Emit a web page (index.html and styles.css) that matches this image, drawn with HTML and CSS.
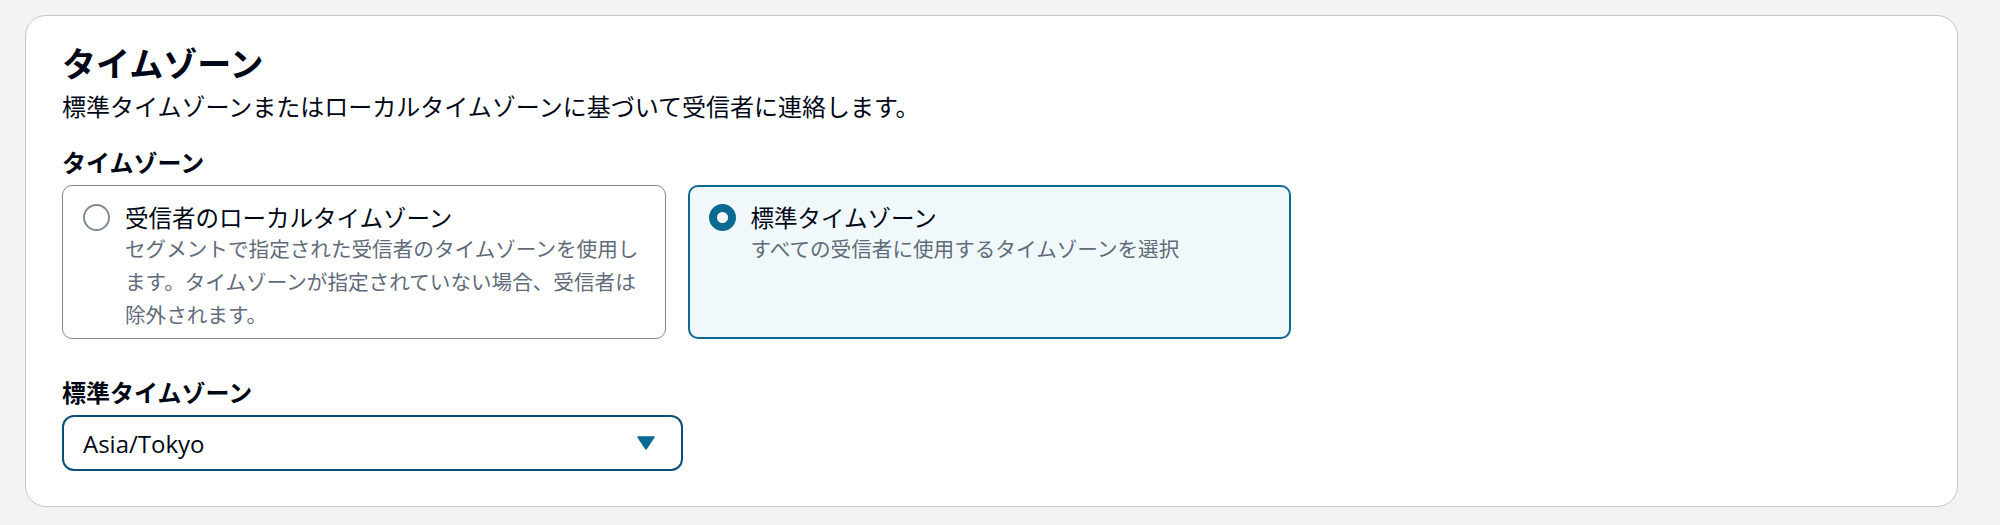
FILE: index.html
```html
<!DOCTYPE html>
<html lang="ja">
<head>
<meta charset="utf-8">
<link rel="stylesheet" href="styles.css">
</head>
<body>
<div class="page">
  <section class="card">
    <h2 class="card-title">タイムゾーン</h2>
    <p class="card-desc">標準タイムゾーンまたはローカルタイムゾーンに基づいて受信者に連絡します。</p>

    <div class="field">
      <div class="label">タイムゾーン</div>
      <div class="tiles">
        <div class="tile">
          <span class="radio"></span>
          <div class="tile-text">
            <div class="tile-title">受信者のローカルタイムゾーン</div>
            <div class="tile-desc">セグメントで指定された受信者のタイムゾーンを使用します。タイムゾーンが指定されていない場合、受信者は除外されます。</div>
          </div>
        </div>
        <div class="tile tile-selected">
          <span class="radio radio-checked"></span>
          <div class="tile-text">
            <div class="tile-title">標準タイムゾーン</div>
            <div class="tile-desc">すべての受信者に使用するタイムゾーンを選択</div>
          </div>
        </div>
      </div>
    </div>

    <div class="field field-select">
      <div class="label">標準タイムゾーン</div>
      <div class="select">
        <span class="select-value">Asia/Tokyo</span>
        <svg class="caret" width="18" height="14" viewBox="0 0 18 14"><polygon points="1,1 17,1 9,13" fill="#0b6a8f" stroke="#0b6a8f" stroke-width="1.5" stroke-linejoin="round"/></svg>
      </div>
    </div>
  </section>
</div>
</body>
</html>
```

FILE: styles.css
```css
* { box-sizing: border-box; }
html, body {
  margin: 0;
  padding: 0;
  background: #f3f3f3;
  font-family: "Open Sans", "Noto Sans CJK JP", sans-serif;
  color: #000716;
}
.page {
  padding: 15px 42px 18px 25px;
}
.card {
  background: #ffffff;
  border: 1px solid #c6c6cd;
  border-radius: 21px;
  height: 492px;
  padding: 22px 36px 34px 36px;
}
.card-title {
  margin: 0;
  font-family: "Noto Sans CJK JP", sans-serif;
  font-size: 34px;
  line-height: 50px;
  font-weight: 700;
  color: #000716;
}
.card-desc {
  margin: 0;
  font-family: "Noto Sans CJK JP", sans-serif;
  font-size: 24px;
  line-height: 35px;
  color: #000716;
}
.field {
  margin-top: 23px;
}
.field-select {
  margin-top: 37px;
}
.label {
  font-family: "Noto Sans CJK JP", sans-serif;
  font-size: 24px;
  line-height: 32px;
  font-weight: 700;
  margin-bottom: 7px;
}
.tiles {
  display: grid;
  grid-template-columns: 1fr 1fr;
  column-gap: 22px;
  width: 1229px;
}
.tile {
  display: flex;
  align-items: flex-start;
  gap: 15px;
  height: 154px;
  border: 1.5px solid #7d8998;
  border-radius: 10px;
  padding: 17px 20px 18px 20px;
  background: #ffffff;
}
.tile-selected {
  border: 2.5px solid #0b6a8f;
  background: #f1f8fb;
  padding: 16px 19px 17px 19px;
}
.radio {
  flex: none;
  width: 27px;
  height: 27px;
  margin-top: 1px;
  border-radius: 50%;
  border: 2px solid #7d8998;
  background: #ffffff;
}
.radio-checked {
  border: 8.5px solid #0b6a8f;
  background: #ffffff;
}
.tile-text {
  font-family: "Noto Sans CJK JP", sans-serif;
}
.tile-title {
  font-size: 23.5px;
  line-height: 29px;
  color: #000716;
}
.tile-desc {
  font-size: 20.6px;
  line-height: 33px;
  color: #5f6b7a;
}
.select {
  display: flex;
  align-items: center;
  justify-content: space-between;
  width: 621px;
  height: 56px;
  border: 2.5px solid #0a4f76;
  border-radius: 12px;
  padding: 0 26px 0 19px;
  background: #ffffff;
}
.select-value {
  font-family: "Open Sans", "Noto Sans CJK JP", sans-serif;
  font-size: 24px;
  color: #000716;
}
.caret {
  display: block;
}
```
